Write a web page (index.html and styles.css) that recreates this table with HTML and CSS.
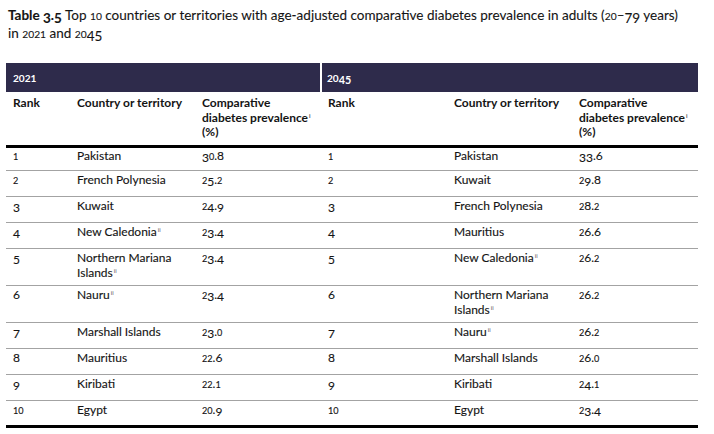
FILE: index.html
```html
<!DOCTYPE html>
<html lang="en">
<head>
<meta charset="utf-8">
<title>Table 3.5</title>
<link rel="stylesheet" href="styles.css">
</head>
<body>
<p class="caption"><b>Table <span class="d">3</span>.<span class="d">5</span></b> Top <span class="o">1</span><span class="o">0</span> countries or territories with age-adjusted comparative diabetes prevalence in adults (<span class="o">2</span><span class="o">0</span>–<span class="d">7</span><span class="d">9</span> years)<br>in <span class="o">2</span><span class="o">0</span><span class="o">2</span><span class="o">1</span> and <span class="o">2</span><span class="o">0</span><span class="d">4</span><span class="d">5</span></p>
<table class="tbl">
  <colgroup>
    <col class="c-rank"><col class="c-country"><col class="c-prev">
    <col class="c-rank2"><col class="c-country"><col class="c-prev">
  </colgroup>
  <thead>
    <tr class="band">
      <th colspan="3"><span class="o">2</span><span class="o">0</span><span class="o">2</span><span class="o">1</span></th>
      <th colspan="3" class="band-right"><span class="o">2</span><span class="o">0</span><span class="d">4</span><span class="d">5</span></th>
    </tr>
    <tr class="heads">
      <th>Rank</th><th>Country or territory</th><th>Comparative diabetes prevalence<sup>i</sup> (%)</th>
      <th>Rank</th><th>Country or territory</th><th>Comparative diabetes prevalence<sup>i</sup> (%)</th>
    </tr>
  </thead>
  <tbody>
    <tr>
      <td><span class="o">1</span></td><td>Pakistan</td><td><span class="d">3</span><span class="o">0</span>.8</td>
      <td><span class="o">1</span></td><td>Pakistan</td><td><span class="d">3</span><span class="d">3</span>.6</td>
    </tr>
    <tr>
      <td><span class="o">2</span></td><td>French Polynesia</td><td><span class="o">2</span><span class="d">5</span>.<span class="o">2</span></td>
      <td><span class="o">2</span></td><td>Kuwait</td><td><span class="o">2</span><span class="d">9</span>.8</td>
    </tr>
    <tr>
      <td><span class="d">3</span></td><td>Kuwait</td><td><span class="o">2</span><span class="d">4</span>.<span class="d">9</span></td>
      <td><span class="d">3</span></td><td>French Polynesia</td><td><span class="o">2</span>8.<span class="o">2</span></td>
    </tr>
    <tr>
      <td><span class="d">4</span></td><td>New Caledonia<sup>ii</sup></td><td><span class="o">2</span><span class="d">3</span>.<span class="d">4</span></td>
      <td><span class="d">4</span></td><td>Mauritius</td><td><span class="o">2</span>6.6</td>
    </tr>
    <tr>
      <td><span class="d">5</span></td><td>Northern Mariana<br>Islands<sup>ii</sup></td><td><span class="o">2</span><span class="d">3</span>.<span class="d">4</span></td>
      <td><span class="d">5</span></td><td>New Caledonia<sup>ii</sup></td><td><span class="o">2</span>6.<span class="o">2</span></td>
    </tr>
    <tr>
      <td>6</td><td>Nauru<sup>ii</sup></td><td><span class="o">2</span><span class="d">3</span>.<span class="d">4</span></td>
      <td>6</td><td>Northern Mariana<br>Islands<sup>ii</sup></td><td><span class="o">2</span>6.<span class="o">2</span></td>
    </tr>
    <tr>
      <td><span class="d">7</span></td><td>Marshall Islands</td><td><span class="o">2</span><span class="d">3</span>.<span class="o">0</span></td>
      <td><span class="d">7</span></td><td>Nauru<sup>ii</sup></td><td><span class="o">2</span>6.<span class="o">2</span></td>
    </tr>
    <tr>
      <td>8</td><td>Mauritius</td><td><span class="o">2</span><span class="o">2</span>.6</td>
      <td>8</td><td>Marshall Islands</td><td><span class="o">2</span>6.<span class="o">0</span></td>
    </tr>
    <tr>
      <td><span class="d">9</span></td><td>Kiribati</td><td><span class="o">2</span><span class="o">2</span>.<span class="o">1</span></td>
      <td><span class="d">9</span></td><td>Kiribati</td><td><span class="o">2</span><span class="d">4</span>.<span class="o">1</span></td>
    </tr>
    <tr>
      <td><span class="o">1</span><span class="o">0</span></td><td>Egypt</td><td><span class="o">2</span><span class="o">0</span>.<span class="d">9</span></td>
      <td><span class="o">1</span><span class="o">0</span></td><td>Egypt</td><td><span class="o">2</span><span class="d">3</span>.<span class="d">4</span></td>
    </tr>
  </tbody>
</table>
</body>
</html>
```

FILE: styles.css
```css
html, body {
  margin: 0;
  padding: 0;
  background: #ffffff;
}
body {
  font-family: "Lato", "Liberation Sans", sans-serif;
  color: #141414;
  width: 714px;
  height: 434px;
  overflow: hidden;
}
.caption {
  margin: 0;
  padding: 6px 0 0 8px;
  font-size: 13.5px;
  line-height: 18px;
  -webkit-text-stroke: 0.1px #141414;
}
.caption b {
  font-weight: 700;
}
.o {
  font-size: 0.76em;
  line-height: 0;
}
.d {
  vertical-align: -0.2em;
  line-height: 0;
}
.tbl {
  margin: 21px 0 0 6px;
  width: 692px;
  border-collapse: collapse;
  table-layout: fixed;
  font-size: 12px;
  line-height: 15px;
}
.c-rank { width: 64px; }
.c-rank2 { width: 126px; }
.c-country { width: 125px; }
.c-prev { width: 126px; }
.tbl th, .tbl td {
  text-align: left;
  vertical-align: top;
  padding: 0 7px 6px 7px;
}
.band th {
  background: #2e2b4b;
  color: #ffffff;
  font-size: 12px;
  font-weight: 700;
  height: 29px;
  padding: 0 7px;
  vertical-align: middle;
  box-sizing: border-box;
}
.band .o {
  font-size: 0.84em;
}
.band .d {
  font-size: 0.9em;
  vertical-align: -0.15em;
}
.band .band-right {
  border-left: 2px solid #ffffff;
  padding-left: 5px;
}
.heads th {
  font-weight: 700;
  padding: 4px 7px 5px 7px;
  line-height: 14.5px;
  border-bottom: 3px solid #000000;
}
.tbl tbody tr {
  height: 26px;
}
.tbl tbody td {
  border-bottom: 1px solid #a3a3a3;
  padding-top: 1px;
  padding-bottom: 5px;
  -webkit-text-stroke: 0.12px #141414;
}
.tbl tbody tr:first-child {
  height: 24px;
}
.tbl tbody tr:first-child td {
  padding-top: 0;
}
.tbl tbody tr:last-child td {
  border-bottom: 3px solid #000000;
}
sup {
  font-size: 6px;
  line-height: 1;
  vertical-align: 4px;
  margin-left: 1px;
  color: #555555;
  -webkit-text-stroke: 0;
}
```
